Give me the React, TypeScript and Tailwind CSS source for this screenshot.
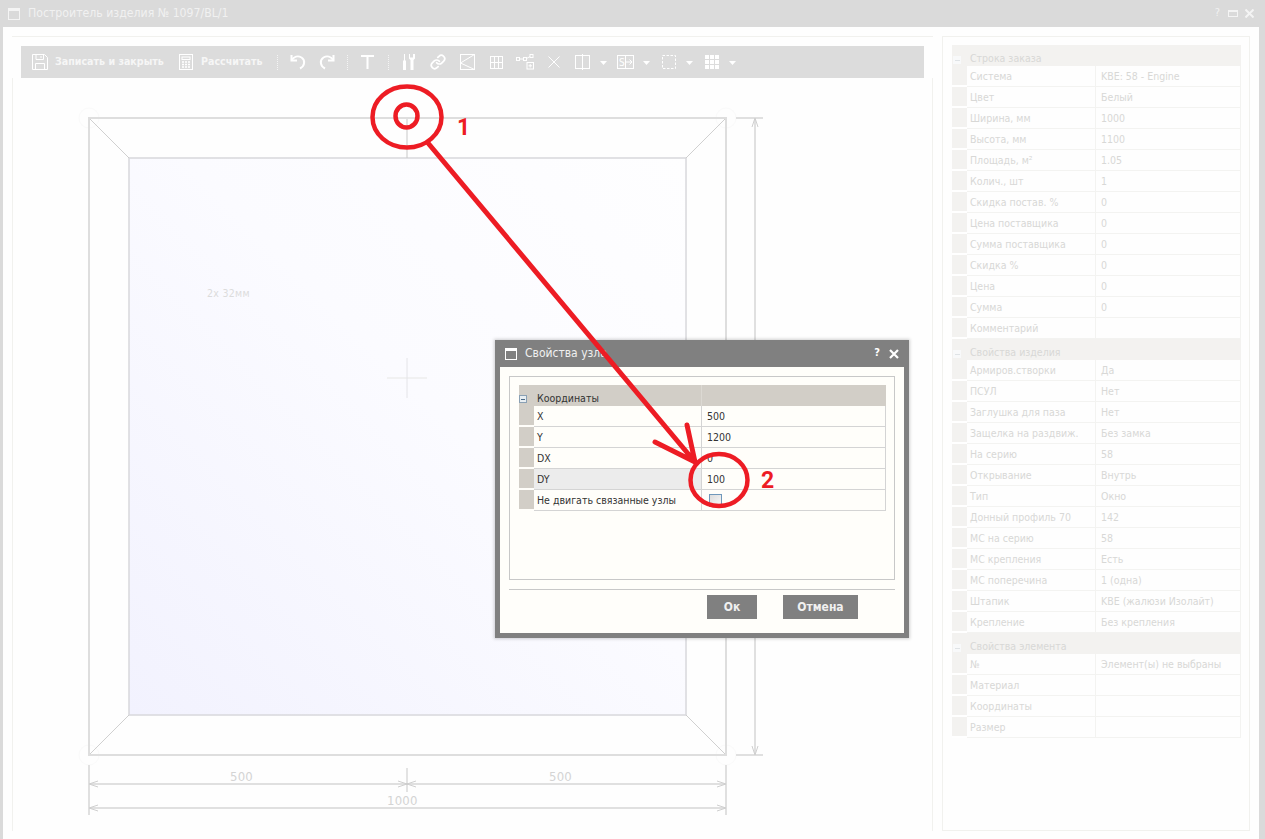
import React from "react";
import { Link } from "lucide-react";

type Item = [string, string];

const orderRows: Item[] = [
  ["Система", "KBE: 58 - Engine"],
  ["Цвет", "Белый"],
  ["Ширина, мм", "1000"],
  ["Высота, мм", "1100"],
  ["Площадь, м²", "1.05"],
  ["Колич., шт", "1"],
  ["Скидка постав. %", "0"],
  ["Цена поставщика", "0"],
  ["Сумма поставщика", "0"],
  ["Скидка %", "0"],
  ["Цена", "0"],
  ["Сумма", "0"],
  ["Комментарий", ""],
];
const productRows: Item[] = [
  ["Армиров.створки", "Да"],
  ["ПСУЛ", "Нет"],
  ["Заглушка для паза", "Нет"],
  ["Защелка на раздвиж.", "Без замка"],
  ["На серию", "58"],
  ["Открывание", "Внутрь"],
  ["Тип", "Окно"],
  ["Донный профиль 70", "142"],
  ["МС на серию", "58"],
  ["МС крепления", "Есть"],
  ["МС поперечина", "1 (одна)"],
  ["Штапик", "KBE (жалюзи Изолайт)"],
  ["Крепление", "Без крепления"],
];
const elementRows: Item[] = [
  ["№", "Элемент(ы) не выбраны"],
  ["Материал", ""],
  ["Координаты", ""],
  ["Размер", ""],
];

function SideGroup({ title, rows }: { title: string; rows: Item[] }) {
  return (
    <div className="w-[289px]">
      <div className="flex h-[21px] items-end bg-[#f3f2f0] text-[#d8d8d6]">
        <div className="mb-[2px] ml-[1px] flex h-[8px] w-[8px] items-center justify-center bg-[#f8f9fa]">
          <div className="h-[1px] w-[5px] bg-[#dfe3e6]" />
        </div>
        <div className="ml-[9px] leading-[15px]">{title}</div>
      </div>
      {rows.map(([k, v]) => (
        <div key={k} className="flex h-[21px] text-[#d8d8d6]">
          <div className="w-[15px] flex-none border-b-2 border-white bg-[#f3f2f0]" />
          <div className="flex w-[128px] flex-none items-center border-b border-[#f3f3f1] pl-[3px] pt-[1px]">{k}</div>
          <div className="flex w-[146px] flex-none items-center border-b border-r border-l border-[#f3f3f1] pl-[5px] pt-[1px]">{v}</div>
        </div>
      ))}
    </div>
  );
}

const dialogRows: Item[] = [
  ["X", "500"],
  ["Y", "1200"],
  ["DX", "0"],
  ["DY", "100"],
];

function Dialog() {
  return (
    <div className="absolute left-[495px] top-[340px] flex h-[298px] w-[414px] flex-col bg-[#808080] px-[5px] pb-[5px] shadow-[0_0_3px_1px_rgba(0,0,0,0.18)]">
      <div className="flex h-[27px] flex-none items-center text-[12px] text-[#f0f0f0]">
        <svg width="12" height="12" viewBox="0 0 12 12" className="ml-[5px]">
          <rect x="0.5" y="0.5" width="11" height="11" fill="none" stroke="#fff" />
          <rect x="0" y="0" width="12" height="3" fill="#fff" />
        </svg>
        <span className="mb-[2px] ml-[8px]">Свойства узла</span>
        <span className="ml-auto text-[11px] font-bold text-white">?</span>
        <svg width="10" height="10" viewBox="0 0 10 10" className="ml-[9px] mr-[5px]">
          <path d="M1 1L9 9M9 1L1 9" stroke="#fff" strokeWidth="2.2" />
        </svg>
      </div>
      <div className="flex-1 bg-[#fffefa] pt-[9px]">
        <div className="mx-[9px] h-[204px] border border-[#c8c8c8] pl-[9px] pt-[8px] text-[#333333]">
          <div className="flex h-[21px] w-[367px] items-end bg-[#d2cec7]">
            <div className="mb-[3px] flex h-[8px] w-[8px] items-center justify-center border border-[#8aa0b4] bg-[#e8eef2]">
              <div className="h-[1px] w-[4px] bg-[#4a6a88]" />
            </div>
            <div className="ml-[10px] w-[164px] flex-none leading-[15px]">Координаты</div>
            <div className="h-full w-[1px] bg-[#dcd9d3]" />
          </div>
          {dialogRows.map(([k, v]) => (
            <div key={k} className="flex h-[21px] w-[367px]">
              <div className="w-[15px] flex-none border-b-2 border-[#fffefa] bg-[#d2cec7]" />
              <div className={k === "DY" ? "flex w-[167px] flex-none items-center border-b border-[#d4d4d4] bg-[#ececec] pl-[3px] pt-[1px]" : "flex w-[167px] flex-none items-center border-b border-[#d4d4d4] pl-[3px] pt-[1px]"}>{k}</div>
              <div className="flex flex-1 items-center border-b border-l border-r border-[#d4d4d4] pl-[5px] pt-[1px]">{v}</div>
            </div>
          ))}
          <div className="flex h-[21px] w-[367px]">
            <div className="w-[15px] flex-none border-b-2 border-[#fffefa] bg-[#d2cec7]" />
            <div className="flex w-[167px] flex-none items-center border-b border-[#d4d4d4] pl-[3px] pt-[1px]">Не двигать связанные узлы</div>
            <div className="flex flex-1 items-center border-b border-l border-r border-[#d4d4d4] pl-[7px]">
              <div className="h-[13px] w-[13px] border border-[#6f98bb] bg-gradient-to-br from-[#dcdcdc] to-[#f8f8f8]" />
            </div>
          </div>
        </div>
        <div className="mx-[9px] mt-[9px] h-[1px] bg-[#c8c8c8]" />
        <div className="mt-[5px] flex justify-end gap-[26px] pr-[46px] text-[12px] font-bold text-[#f0f0f0]">
          <div className="flex h-[24px] w-[50px] items-center justify-center bg-[#808080]">Ок</div>
          <div className="flex h-[24px] w-[75px] items-center justify-center bg-[#808080]">Отмена</div>
        </div>
      </div>
    </div>
  );
}

const Sep = ({ ml }: { ml: string }) => (
  <div className={`${ml} h-[15px] w-[1px] flex-none border-l border-dotted border-[#f4f4f4]`} />
);

const Caret = ({ ml }: { ml: string }) => (
  <svg width="7" height="4" viewBox="0 0 7 4" className={`${ml} mt-[1px] flex-none`}>
    <path d="M0 0H7L3.5 4Z" fill="#fff" />
  </svg>
);

function Toolbar() {
  return (
    <div className="mx-[9px] mt-[9px] flex h-[32px] flex-none items-center bg-[#dcdcdc] pl-[11px] text-[10.6px] font-bold text-[#f6f6f6]">
      <svg width="16" height="16" viewBox="0 0 16 16" className="flex-none" fill="none" stroke="#fff">
        <path d="M.5.5H12.5L15.5 3.5V15.5H.5Z" />
        <path d="M4 .5V5.5H11.5V.5M9 2V4M3.5 15.5V9.5H12.5V15.5" />
      </svg>
      <span className="ml-[7px] w-[109px] flex-none whitespace-nowrap">Записать и закрыть</span>
      <svg width="14" height="16" viewBox="0 0 14 16" className="ml-[15px] flex-none" fill="none" stroke="#fff">
        <rect x=".5" y=".5" width="13" height="15" />
        <rect x="3" y="3" width="8" height="2.5" />
        <path d="M3 8h2M6 8h2M9 8h2M3 10.5h2M6 10.5h2M9 10.5h2M3 13h2M6 13h2M9 13h2" strokeWidth="1.4" />
      </svg>
      <span className="ml-[8px] w-[63px] flex-none whitespace-nowrap">Рассчитать</span>
      <Sep ml="ml-[13px]" />
      <svg width="16" height="16" viewBox="0 0 16 16" className="ml-[12px] flex-none" fill="none" stroke="#fff" strokeWidth="2">
        <path d="M1.5 1V6.5H7" />
        <path d="M1.5 6.5C4 2.5 8 1.5 11.5 3.5C15.5 6 15 12 10 14.5" />
      </svg>
      <svg width="16" height="16" viewBox="0 0 16 16" className="ml-[13px] flex-none" fill="none" stroke="#fff" strokeWidth="2">
        <path d="M14.5 1V6.5H9" />
        <path d="M14.5 6.5C12 2.5 8 1.5 4.5 3.5C.5 6 1 12 6 14.5" />
      </svg>
      <Sep ml="ml-[12px]" />
      <svg width="13" height="14" viewBox="0 0 13 14" className="ml-[13px] flex-none" fill="none" stroke="#fff" strokeWidth="2">
        <path d="M0 1H13M6.5 1V14" />
      </svg>
      <Sep ml="ml-[14px]" />
      <svg width="12" height="16" viewBox="0 0 12 16" className="ml-[14px] flex-none" fill="#fff">
        <path d="M1 0H2V6.5H3V16H0V6.5H1Z" />
        <path d="M6 0H7V3.5H10V0H12V4.5L10.5 6V16H7.5V6L6 4.5Z" />
      </svg>
      <Link size={16} strokeWidth={2.6} color="#fff" className="ml-[15px] flex-none" />
      <svg width="15" height="16" viewBox="0 0 15 16" className="ml-[14px] flex-none" fill="none" stroke="#fff">
        <rect x=".5" y=".5" width="14" height="15" />
        <path d="M14.5 .5L.5 9L14.5 15.5" />
      </svg>
      <svg width="13" height="13" viewBox="0 0 13 13" className="ml-[15px] flex-none" fill="none" stroke="#fff">
        <rect x=".5" y=".5" width="12" height="12" />
        <path d="M4.5 .5V12.5M8.5 .5V12.5M.5 6.5H12.5" />
      </svg>
      <svg width="18" height="16" viewBox="0 0 18 16" className="ml-[13px] flex-none" fill="none" stroke="#fff">
        <rect x=".5" y="3.5" width="3" height="3" />
        <rect x="7.5" y="3.5" width="3" height="3" />
        <rect x="14" y=".5" width="3" height="3" />
        <path d="M3.5 5H7.5M10.5 4.5L14 2.5" />
        <rect x="11" y="8.5" width="6.5" height="6.5" />
        <path d="M14.2 10V13.5M12.5 11.8H16" />
      </svg>
      <svg width="12" height="12" viewBox="0 0 12 12" className="ml-[14px] flex-none" fill="none" stroke="#fff">
        <path d="M.5.5L11.5 11.5M11.5.5L.5 11.5" />
      </svg>
      <svg width="15" height="16" viewBox="0 0 15 16" className="ml-[15px] flex-none" fill="none" stroke="#fff">
        <rect x=".5" y="1.5" width="14" height="13" />
        <path d="M7.5 0V16" />
      </svg>
      <Caret ml="ml-[10px]" />
      <svg width="17" height="14" viewBox="0 0 17 14" className="ml-[10px] flex-none" fill="none" stroke="#fff">
        <rect x=".5" y=".5" width="16" height="13" />
        <path d="M8.5 .5V13.5M8 7H15M12.5 4.5L15 7L12.5 9.5" />
        <text x="2" y="10.5" fontSize="10" fontWeight="400" fill="#fff" stroke="none">S</text>
      </svg>
      <Caret ml="ml-[9px]" />
      <svg width="14" height="14" viewBox="0 0 14 14" className="ml-[12px] flex-none" fill="none" stroke="#fff" strokeDasharray="2.5 1.5">
        <rect x=".5" y=".5" width="13" height="13" />
      </svg>
      <Caret ml="ml-[10px]" />
      <svg width="14" height="14" viewBox="0 0 14 14" className="ml-[12px] flex-none" fill="#fff">
        <path d="M0 0h4v4H0zM5 0h4v4H5zM10 0h4v4h-4zM0 5h4v4H0zM5 5h4v4H5zM10 5h4v4h-4zM0 10h4v4H0zM5 10h4v4H5zM10 10h4v4h-4z" />
      </svg>
      <Caret ml="ml-[10px]" />
    </div>
  );
}

const Head = ({ d }: { d: string }) => <path d={d} fill="none" stroke="#cfcfcf" strokeWidth="1" />;

function Drawing() {
  return (
    <svg viewBox="13 78 919 753" className="block h-full w-full">
      <defs>
        <linearGradient id="glass" x1="0" y1="1" x2="1" y2="0">
          <stop offset="0" stopColor="#f2f2fe" />
          <stop offset="0.55" stopColor="#fbfbff" />
          <stop offset="1" stopColor="#fefeff" />
        </linearGradient>
      </defs>
      <g fill="#fefefe" stroke="#fafafa">
        <circle cx="89" cy="118" r="10" />
        <circle cx="726" cy="118" r="10" />
        <circle cx="89" cy="755" r="10" />
        <circle cx="726" cy="755" r="10" />
      </g>
      <rect x="129" y="158" width="557" height="557" fill="url(#glass)" stroke="#d8d8dc" strokeWidth="1.5" />
      <path d="M89 118L129 158M726 118L686 158M89 755L129 715M726 755L686 715" stroke="#c4c4c4" strokeWidth="0.8" />
      <path d="M407 118V158" stroke="#c8c8c8" strokeWidth="1" />
      <rect x="89" y="118" width="637" height="637" fill="none" stroke="#dedede" strokeWidth="2" />
      <path d="M387 378H427" stroke="#eeeeee" strokeWidth="1.4" />
      <path d="M407 358V398" stroke="#e4e4e8" strokeWidth="1" />
      <text x="207" y="297" fontSize="10.5" letterSpacing="0.3" fill="#dcdcdc">2x 32мм</text>

      <g stroke="#e0e0e0" strokeWidth="2" fill="none">
        <path d="M736 118H763M736 755H763M755 118V755" />
        <path d="M89 765V815M726 765V815" />
        <path d="M89 784H726M89 808H726" />
      </g>
      <Head d="M752 127L755 118L758 127M752 746L755 755L758 746" />
      <Head d="M98 781L89 784L98 787M717 781L726 784L717 787M98 805L89 808L98 811M717 805L726 808L717 811" />
      <Head d="M398 781L407 784L398 787M416 781L407 784L416 787" />
      <path d="M407 768V792" stroke="#c8c8c8" strokeWidth="1" />
      <g fontSize="13" fill="#d4d4d4" letterSpacing="0.2">
        <text x="230" y="781">500</text>
        <text x="549" y="781">500</text>
        <text x="387" y="805">1000</text>
      </g>
    </svg>
  );
}

function Annotations() {
  return (
    <svg width="1265" height="839" viewBox="0 0 1265 839" className="pointer-events-none absolute left-0 top-0">
      <g fill="none" stroke="#ed1c24">
        <ellipse cx="407" cy="117" rx="34.5" ry="30.5" strokeWidth="4.5" />
        <ellipse cx="406.5" cy="116" rx="11" ry="11.5" strokeWidth="4.5" />
        <path d="M428 143L695 462M655 442L695 462M687 425L695 462" strokeWidth="5" strokeLinecap="round" />
        <ellipse cx="719" cy="480" rx="28.5" ry="26" strokeWidth="4.5" />
      </g>
      <g fill="#ed1c24" fontSize="23" fontWeight="700" fontFamily="Roboto, Arial, sans-serif">
        <text x="457" y="135">1</text>
        <text x="761" y="488">2</text>
      </g>
    </svg>
  );
}

export default function App() {
  return (
    <div className="relative flex h-[839px] w-[1265px] flex-col overflow-hidden bg-[#dadada] font-['DejaVu_Sans_Condensed','DejaVu_Sans',sans-serif] text-[10.5px]">
      <div className="flex h-[27px] flex-none items-center text-[12.2px] text-[#f1f1f1]">
        <svg width="12" height="12" viewBox="0 0 12 12" className="ml-[8px]">
          <rect x="0.5" y="0.5" width="11" height="11" fill="none" stroke="#f4f4f4" />
          <rect x="0" y="0" width="12" height="3" fill="#f4f4f4" />
        </svg>
        <span className="ml-[8px]">Построитель изделия № 1097/BL/1</span>
        <span className="ml-auto text-[11px]">?</span>
        <svg width="10" height="7" viewBox="0 0 10 7" className="ml-[8px]">
          <rect x=".5" y=".5" width="9" height="6" fill="none" stroke="#f4f4f4" />
          <rect width="10" height="2" fill="#f4f4f4" />
        </svg>
        <svg width="9" height="9" viewBox="0 0 9 9" className="ml-[7px] mr-[11px]">
          <path d="M.5 .5L8.5 8.5M8.5 .5L.5 8.5" stroke="#f4f4f4" strokeWidth="2" />
        </svg>
      </div>
      <div className="ml-[3px] mr-[6px] flex flex-1 bg-[#fefefe] pb-[8px] pt-[9px]">
        <div className="ml-[9px] flex w-[921px] flex-none flex-col border-t border-[#f1f1ee]">
          <Toolbar />
          <div className="min-h-0 flex-1 border-l border-r border-[#f1f1ee]">
            <Drawing />
          </div>
        </div>
        <div className="ml-[9px] w-[308px] flex-none border border-[#f1f1ee] pl-[9px] pt-[8px]">
          <SideGroup title="Строка заказа" rows={orderRows} />
          <SideGroup title="Свойства изделия" rows={productRows} />
          <SideGroup title="Свойства элемента" rows={elementRows} />
        </div>
      </div>
      <Dialog />
      <Annotations />
    </div>
  );
}
